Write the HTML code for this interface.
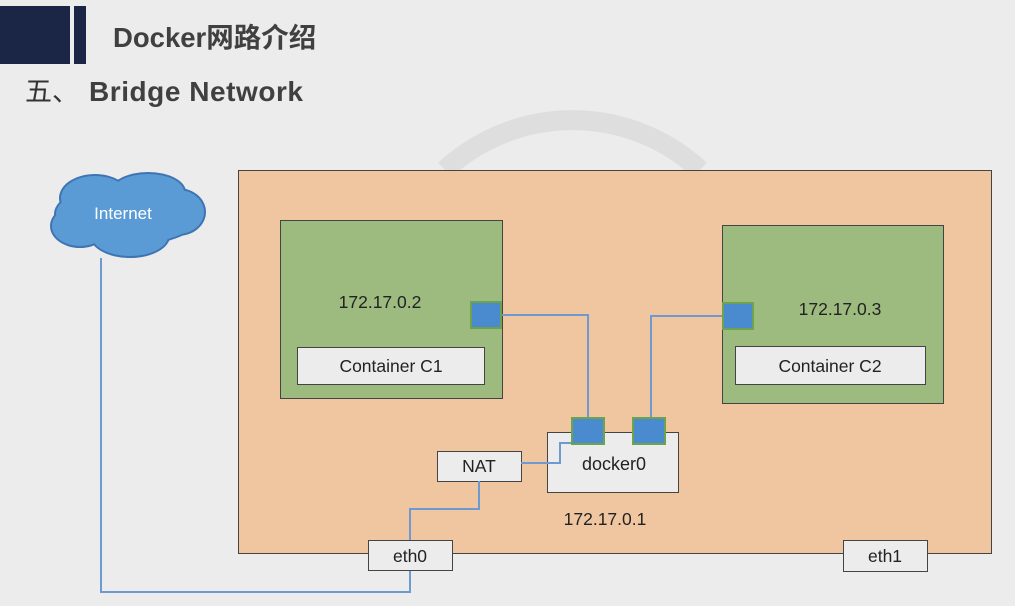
<!DOCTYPE html>
<html><head><meta charset="utf-8"><style>
body{margin:0;width:1015px;height:606px;overflow:hidden;background:#ececec;font-family:"Liberation Sans","Noto Sans CJK SC",sans-serif}
</style></head><body>
<svg width="1015" height="606" xmlns="http://www.w3.org/2000/svg" style="position:absolute;left:0;top:0">
<rect x="0" y="6" width="70" height="58" fill="#1b2646"/>
<rect x="74" y="6" width="12" height="58" fill="#1b2646"/>
<text x="113" y="47" font-size="27.5" font-weight="bold" fill="#404040" font-family="Liberation Sans,Noto Sans CJK SC,sans-serif">Docker网路介绍</text>
<text x="25" y="101" font-size="27" fill="#333" font-family="Noto Sans CJK SC,sans-serif">五、</text>
<text x="89" y="101" font-size="28" font-weight="bold" fill="#404040" textLength="214">Bridge Network</text>
<path d="M445 170 A188 188 0 0 1 700 170" fill="none" stroke="#dedede" stroke-width="20"/>
<rect x="238.5" y="170.5" width="753" height="383" fill="#f0c6a0" stroke="#444" stroke-width="1"/>
<g fill="#3f74b3">
<ellipse cx="128" cy="214" rx="74" ry="32"/>
<ellipse cx="95" cy="198" rx="36" ry="24"/>
<ellipse cx="148" cy="192" rx="38" ry="20"/>
<ellipse cx="178" cy="212" rx="28" ry="24"/>
<ellipse cx="80" cy="226" rx="30" ry="22"/>
<ellipse cx="130" cy="236" rx="40" ry="22"/>
</g>
<g fill="#5b9bd5">
<ellipse cx="128" cy="214" rx="72" ry="30"/>
<ellipse cx="95" cy="198" rx="34" ry="22"/>
<ellipse cx="148" cy="192" rx="36" ry="18"/>
<ellipse cx="178" cy="212" rx="26" ry="22"/>
<ellipse cx="80" cy="226" rx="28" ry="20"/>
<ellipse cx="130" cy="236" rx="38" ry="20"/>
</g>
<text x="123" y="219" font-size="17" fill="#fff" text-anchor="middle">Internet</text>
<rect x="280.5" y="220.5" width="222" height="178" fill="#9dbb7f" stroke="#444"/>
<text x="380" y="308" font-size="17.5" fill="#222" text-anchor="middle">172.17.0.2</text>
<rect x="297.5" y="347.5" width="187" height="37" fill="#ececec" stroke="#444"/>
<text x="391" y="372" font-size="17.5" fill="#222" text-anchor="middle">Container C1</text>
<rect x="722.5" y="225.5" width="221" height="178" fill="#9dbb7f" stroke="#444"/>
<text x="840" y="315" font-size="17.5" fill="#222" text-anchor="middle">172.17.0.3</text>
<rect x="735.5" y="346.5" width="190" height="38" fill="#ececec" stroke="#444"/>
<text x="830" y="372" font-size="17.5" fill="#222" text-anchor="middle">Container C2</text>
<rect x="547.5" y="432.5" width="131" height="60" fill="#ececec" stroke="#444"/>
<text x="614" y="470" font-size="18" fill="#222" text-anchor="middle">docker0</text>
<text x="605" y="525" font-size="17.5" fill="#222" text-anchor="middle">172.17.0.1</text>
<rect x="437.5" y="451.5" width="84" height="30" fill="#ececec" stroke="#444"/>
<text x="479" y="472" font-size="17.5" fill="#222" text-anchor="middle">NAT</text>
<g fill="none" stroke="#6d9ad0" stroke-width="2">
<path d="M501 315 H588 V418"/>
<path d="M722 316 H651 V418"/>
<path d="M521 463 H560 V443 H575"/>
<path d="M479 481 V509 H410 V540"/>
<path d="M101 258 V592 H410 V570"/>
</g>
<rect x="368.5" y="540.5" width="84" height="30" fill="#ececec" stroke="#444"/>
<text x="410" y="562" font-size="17.5" fill="#222" text-anchor="middle">eth0</text>
<rect x="843.5" y="540.5" width="84" height="31" fill="#ececec" stroke="#444"/>
<text x="885" y="562" font-size="17.5" fill="#222" text-anchor="middle">eth1</text>
<g fill="#4a8bd0" stroke="#6da34d" stroke-width="2">
<rect x="471" y="302" width="30" height="26"/>
<rect x="723" y="303" width="30" height="26"/>
<rect x="572" y="418" width="32" height="26"/>
<rect x="633" y="418" width="32" height="26"/>
</g>
</svg>
</body></html>
